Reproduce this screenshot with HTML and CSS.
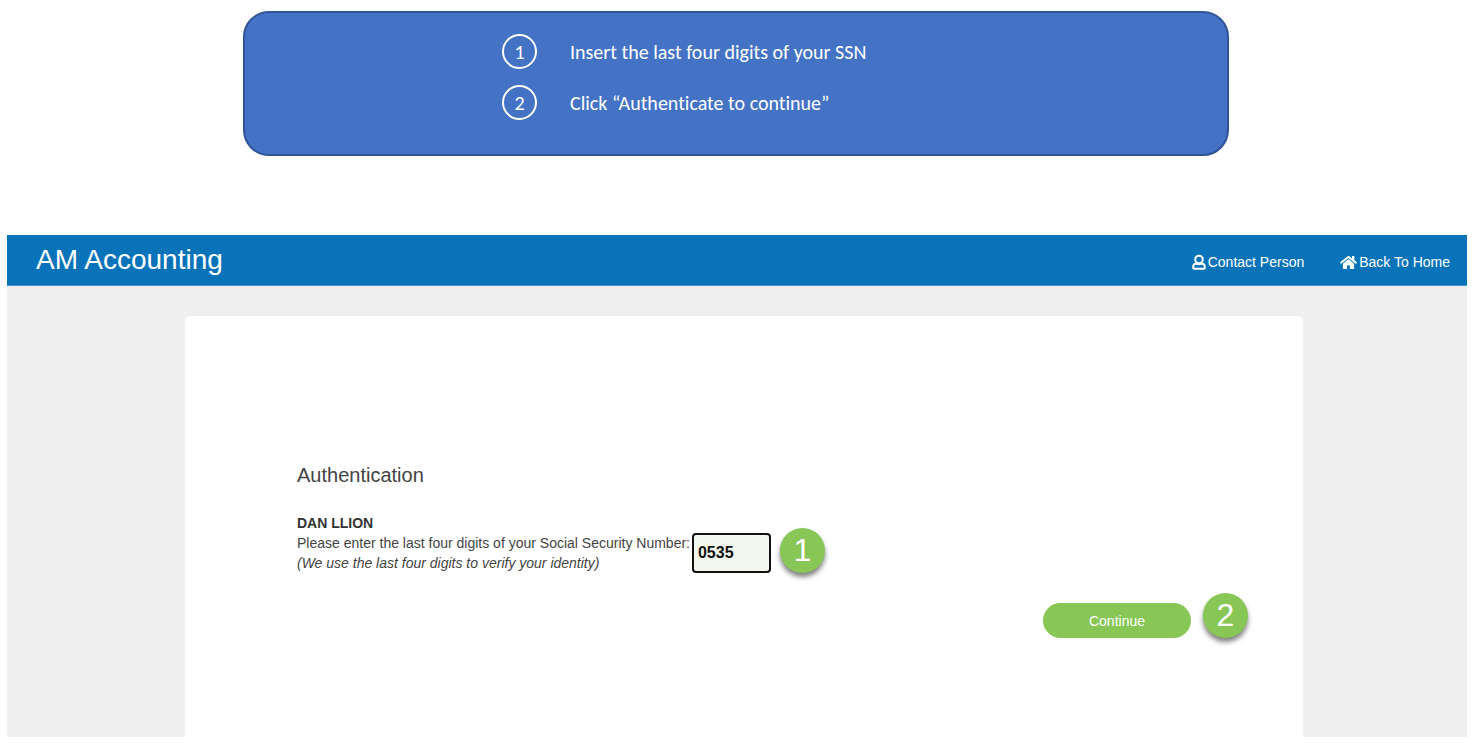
FILE: index.html
```html
<!DOCTYPE html>
<html lang="en">
<head>
<meta charset="utf-8">
<meta name="viewport" content="width=device-width, initial-scale=1">
<title>AM Accounting - Authentication</title>
<link rel="stylesheet" href="styles.css">
</head>
<body>
<section class="guide" aria-label="Instructions">
  <ol class="steps">
    <li class="step"><span class="step-number">1</span><span>Insert the last four digits of your SSN</span></li>
    <li class="step"><span class="step-number">2</span><span>Click “Authenticate to continue”</span></li>
  </ol>
</section>
<div class="site">
  <header class="topbar">
    <h1 class="brand">AM Accounting</h1>
    <nav class="nav">
      <a class="nav-link" href="#contact">
        <svg class="icon-user" viewBox="0 0 14 16" aria-hidden="true"><circle cx="7" cy="5.500" r="3.800"/><path d="M4.300 9.500C2.300 9.800 1.200 11.200 1.200 12.800v1q0 .9.900.9h9.800q.9 0 .9-.9v-1c0-1.600-1.100-3-3.100-3.300-1.600 1-3.800 1-5.400 0z"/></svg>
        Contact Person
      </a>
      <a class="nav-link" href="#home">
        <svg class="icon-home" viewBox="0 0 576 512" aria-hidden="true"><path d="M280.400 148.300 96 300.100V464a16 16 0 0 0 16 16l112.100-.3a16 16 0 0 0 15.900-16V368a16 16 0 0 1 16-16h64a16 16 0 0 1 16 16v95.600a16 16 0 0 0 16 16.100L464 480a16 16 0 0 0 16-16V300L295.700 148.300a12.200 12.200 0 0 0-15.300 0zM571.600 251.500 488 182.600V44.100a12 12 0 0 0-12-12h-56a12 12 0 0 0-12 12v72.600L318.500 43a48 48 0 0 0-61 0L4.300 251.500a12 12 0 0 0-1.600 16.900l25.500 31a12 12 0 0 0 16.900 1.600L280.400 107.200a12.200 12.200 0 0 1 15.300 0L531 301a12 12 0 0 0 16.900-1.600l25.500-31a12 12 0 0 0-1.800-16.900z"/></svg>
        Back To Home
      </a>
    </nav>
  </header>
  <main class="stage">
    <form class="card">
      <h2 class="title">Authentication</h2>
      <div class="field">
        <div class="prompt">
          <strong>DAN LLION</strong>
          <label for="ssn">Please enter the last four digits of your Social Security Number:</label>
          <em>(We use the last four digits to verify your identity)</em>
        </div>
        <input class="ssn" id="ssn" type="text" inputmode="numeric" maxlength="4" value="0535">
        <span class="marker">1</span>
      </div>
      <div class="actions">
        <button class="continue" type="button">Continue</button>
        <span class="marker">2</span>
      </div>
    </form>
  </main>
</div>
</body>
</html>
```

FILE: styles.css
```css
* {
  box-sizing: border-box;
}

body {
  display: flex;
  flex-direction: column;
  min-height: 100vh;
  margin: 0;
  padding: 11px 0 6px;
  background: #fff;
  color: #444;
  font: 14px/20px "Liberation Sans", Arial, sans-serif;
}

.guide {
  display: flex;
  justify-content: center;
  width: 67%;
  margin: 0 auto;
  padding: 21px 0 34px;
  border: 2px solid #2f5597;
  border-radius: 26px;
  background: #4472c4;
}

.steps {
  display: grid;
  gap: 16px;
  width: 468px;
  margin: 0;
  padding: 0;
  list-style: none;
  color: #fff;
  font: 20px/22px Carlito, Calibri, "Noto Sans", sans-serif;
  font-variant-ligatures: none;
}

.step {
  display: flex;
  align-items: center;
  gap: 33px;
}

.step-number {
  display: flex;
  align-items: center;
  justify-content: center;
  width: 35px;
  height: 35px;
  border: 2px solid #fff;
  border-radius: 50%;
}

.site {
  display: flex;
  flex: 1;
  flex-direction: column;
  margin: 79px 5px 0 7px;
  background: #efefef;
}

.topbar {
  display: flex;
  align-items: center;
  justify-content: space-between;
  padding: 10px 17px 10px 29px;
  border-bottom: 1px solid #4a97cd;
  background: #0973ba;
  color: #fff;
}

.brand {
  margin: 0;
  font-size: 28px;
  font-weight: 400;
  line-height: 30px;
}

.nav {
  display: flex;
  gap: 36px;
  padding-top: 4px;
}

.nav-link {
  display: flex;
  align-items: center;
  gap: 2px;
  color: inherit;
  text-decoration: none;
}

.icon-user {
  width: 14px;
  height: 16px;
  fill: none;
  stroke: currentColor;
  stroke-width: 2;
}

.icon-home {
  width: 17px;
  height: 15px;
  fill: currentColor;
}

.stage {
  display: flex;
  flex: 1;
  padding: 30px 164px 0 178px;
}

.card {
  flex: 1;
  padding: 147px 112px 80px;
  border-radius: 5px 5px 0 0;
  background: #fff;
}

.title {
  margin: 0 0 26px;
  font-size: 20px;
  font-weight: 400;
  line-height: 24px;
}

.field {
  display: flex;
  align-items: flex-end;
  gap: 2px;
}

.prompt {
  display: grid;
}

.prompt strong {
  color: #333;
}

.ssn {
  width: 79px;
  height: 40px;
  padding: 0 4px;
  border: 2px solid #111;
  border-radius: 4px;
  background: #f2f8ee;
  color: #111;
  font: bold 16px/20px "Liberation Sans", Arial, sans-serif;
}

.marker {
  width: 45px;
  height: 45px;
  border-radius: 50%;
  background: #88c656;
  box-shadow: 0 4px 5px rgba(0, 0, 0, 0.5);
  color: #fff;
  font-size: 32px;
  line-height: 45px;
  text-align: center;
}

.field .marker {
  margin-left: 7px;
}

.actions {
  position: relative;
  display: flex;
  justify-content: flex-end;
  margin-top: 30px;
}

.actions .marker {
  position: absolute;
  top: -10px;
  left: calc(100% + 12px);
}

.continue {
  width: 148px;
  height: 35px;
  border: 0;
  border-radius: 18px;
  background: #88c656;
  color: #fff;
  font: 14px/20px "Liberation Sans", Arial, sans-serif;
}
```
